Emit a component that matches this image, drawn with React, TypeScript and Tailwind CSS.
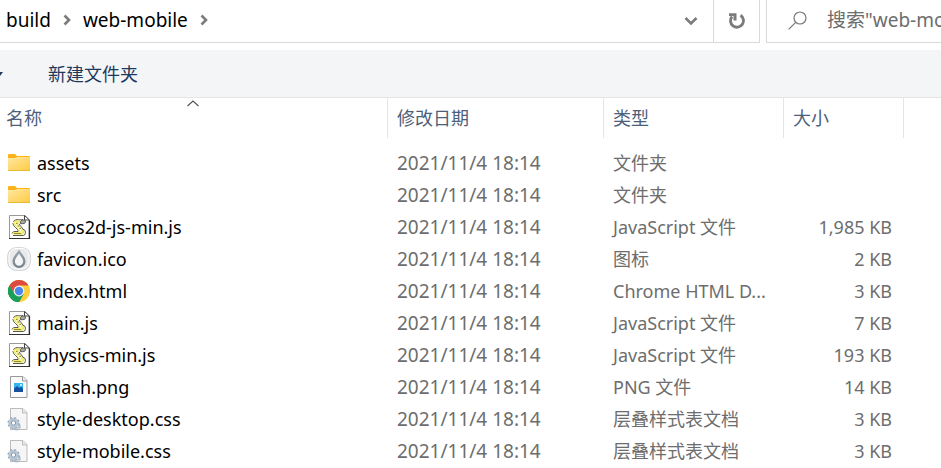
import React from "react";

type Kind = "folder" | "script" | "favicon" | "chrome" | "image" | "css";

const files: { name: string; kind: Kind; type: string; size: string }[] = [
  { name: "assets", kind: "folder", type: "文件夹", size: "" },
  { name: "src", kind: "folder", type: "文件夹", size: "" },
  { name: "cocos2d-js-min.js", kind: "script", type: "JavaScript 文件", size: "1,985 KB" },
  { name: "favicon.ico", kind: "favicon", type: "图标", size: "2 KB" },
  { name: "index.html", kind: "chrome", type: "Chrome HTML D...", size: "3 KB" },
  { name: "main.js", kind: "script", type: "JavaScript 文件", size: "7 KB" },
  { name: "physics-min.js", kind: "script", type: "JavaScript 文件", size: "193 KB" },
  { name: "splash.png", kind: "image", type: "PNG 文件", size: "14 KB" },
  { name: "style-desktop.css", kind: "css", type: "层叠样式表文档", size: "3 KB" },
  { name: "style-mobile.css", kind: "css", type: "层叠样式表文档", size: "3 KB" },
];

function FileIcon({ kind }: { kind: Kind }) {
  const common = { width: 24, height: 24, viewBox: "0 0 24 24", fill: "none", className: "shrink-0", "aria-hidden": true };
  switch (kind) {
    case "folder":
      return (
        <svg {...common}>
          <defs>
            <linearGradient id="folder" x1="0" y1="0" x2="1" y2="1">
              <stop offset="0" stopColor="#ffe8a2" />
              <stop offset="1" stopColor="#ffcb45" />
            </linearGradient>
          </defs>
          <path d="M1 4q0-1 1-1h6l2 2h12q1 0 1 1v3H1z" fill="#f9b41c" />
          <path d="M1 7h7l2-1h13v13.500H1z" fill="url(#folder)" />
          <path d="M1 19.500h22" stroke="#e9b93a" />
        </svg>
      );
    case "script":
      return (
        <svg {...common}>
          <path d="M2.500.500H18l4 4.500v18.500H2.500z" fill="#fff" stroke="#999" />
          <path d="M2 23.500h20.500V5" stroke="#333" strokeWidth="1.200" />
          <path d="M17.500.500V5h5z" fill="#fff" stroke="#444" />
          <path d="M9 4.800h7M6.500 7q.5-2.200 3-2.200M5.800 8q.2 2.500 2.700 4.500t3 4M5 18.500q.5-2 3-2h3M6 20.500h10.500q2-.5 2-3.200t-3-3.300M12 9l4 5" stroke="#444" strokeWidth=".9" />
          <path d="M9 5.500h5.500L13 8.500h-2.200l4.500 6q2.200.5 2.200 2.700t-2 2.600H7q-1.600-.3-1.600-1.300t2.100-1.400h4.300q.3-2-2.300-4.500T6.500 8.200Q6.600 5.800 9 5.500z" fill="#f0ea66" />
          <path d="M8.500 7.500q0 2 3 5t2.500 5.500" stroke="#fffbd0" strokeWidth="1.200" />
          <path d="M15 5h1.800q2 .4 1.700 2t-2.500 1.700h-2.500Q13 6 15 5z" fill="#aaa" stroke="#444" strokeWidth=".8" />
          <path d="M9 8.500h1.500M10.500 11h2M12.500 13.500h1.500M7 18.500h7" stroke="#77752f" strokeWidth=".8" />
        </svg>
      );
    case "favicon":
      return (
        <svg {...common}>
          <defs>
            <linearGradient id="drop" x1="0" y1="0" x2="0" y2="1">
              <stop offset="0" stopColor="#a3aab0" />
              <stop offset="1" stopColor="#71808b" />
            </linearGradient>
          </defs>
          <rect x=".8" y=".8" width="22.400" height="22.400" rx="8" fill="#e9eaec" stroke="#c8cacd" />
          <rect x="2" y="1.500" width="20" height="20.500" rx="7" stroke="#fff" />
          <path d="M12 2.500C10 6 5.500 10 5.500 14.500a6.500 6.500 0 0 0 13 0C18.500 10 14 6 12 2.500z" fill="url(#drop)" />
          <path d="M12 6.500c-1.200 2.500-4.200 5-4.200 8a4.200 4.200 0 0 0 8.400 0c0-3-3-5.500-4.200-8z" fill="#f4f5f6" />
        </svg>
      );
    case "chrome":
      return (
        <svg {...common}>
          <circle cx="12" cy="12" r="11" fill="#fdd03b" />
          <path d="M12 12L2.470 6.500A11 11 0 0 1 21.530 6.500H12z" fill="#dd4b3e" />
          <path d="M2.470 6.500A11 11 0 0 0 12 23l4.760-8.250L12 12 7.240 14.750z" fill="#1a9f5b" />
          <path d="M2.470 6.500l4.770 8.250L12 12V6.500z" fill="#dd4b3e" />
          <path d="M2.470 6.500l4.770 8.250A5.500 5.500 0 0 0 12 17.500L16.760 14.750 12 23A11 11 0 0 1 2.470 6.500z" fill="#1a9f5b" />
          <circle cx="12" cy="12" r="5.400" fill="#f4f4f4" />
          <circle cx="12" cy="12" r="4.200" fill="#4b87ed" />
        </svg>
      );
    case "image":
      return (
        <svg {...common}>
          <path d="M3.500 1.500H16l4 4v17H3.500z" fill="#fafafa" stroke="#999" />
          <path d="M15.500 1.500v4.500h4.500" fill="#eee" stroke="#999" />
          <path d="M7 8h9v9H7z" fill="#1597e5" />
          <path d="M7 8h9v4H7z" fill="#35b4f2" />
          <path d="M7 17v-3l3-3 2.500 2.500L14 12l2 2v3z" fill="#164f9e" />
          <circle cx="14" cy="10" r=".9" fill="#fff" />
        </svg>
      );
    case "css":
      return (
        <svg {...common}>
          <path d="M3.500 1.500H16l4 4v17H3.500z" fill="#f6f6f6" stroke="#bbb" />
          <path d="M15.500 1.500v4.500h4.500" fill="#eaeaea" stroke="#bbb" />
          <circle cx="9.500" cy="19.500" r="3" stroke="#a4b3c0" strokeWidth="2.400" strokeDasharray="1.800 .9" />
          <circle cx="6.500" cy="16" r="3.700" stroke="#b9c8d4" strokeWidth="3" />
          <circle cx="6.500" cy="16" r="5.400" stroke="#9fb0bf" strokeWidth="1.500" strokeDasharray="2.120 2.120" />
          <circle cx="6.500" cy="16" r="2.200" fill="#f8fafb" stroke="#8698a8" />
        </svg>
      );
  }
}

function Crumb({ label }: { label: string }) {
  return (
    <>
      <button type="button" className="whitespace-nowrap">{label}</button>
      <svg width="8" height="12" viewBox="0 0 8 12" fill="none" className="mx-3 shrink-0" aria-hidden="true">
        <path d="M1.500 1.500L6 6l-4.500 4.500" stroke="#7b7b7b" strokeWidth="2.600" />
      </svg>
    </>
  );
}

export default function App() {
  return (
    <main className="overflow-hidden bg-white font-['Noto_Sans','Noto_Sans_CJK_SC',sans-serif] text-[18px] leading-6 text-black">
      <header className="mb-[7px] flex h-[43px] gap-1.5 text-[19px]">
        <div className="flex min-w-0 flex-1 border-r border-b border-[#d9d9d9]">
          <nav aria-label="路径" className="flex min-w-0 flex-1 items-center pb-0.5 pl-1.5">
            <Crumb label="build" />
            <Crumb label="web-mobile" />
          </nav>
          <button type="button" aria-label="历史记录" className="flex w-11 items-center justify-center">
            <svg width="14" height="10" viewBox="0 0 14 10" fill="none" aria-hidden="true">
              <path d="M1.500 2L7 7.500 12.500 2" stroke="#7b7b7b" strokeWidth="2.600" />
            </svg>
          </button>
          <button type="button" aria-label="刷新" className="flex w-[46px] items-center justify-center border-l border-[#d9d9d9]">
            <svg width="18" height="18" viewBox="0 0 18 18" fill="none" aria-hidden="true">
              <path d="M4 4.500A6.500 6.500 0 1 0 12.500 3.200" stroke="#7b7b7b" strokeWidth="2.900" />
              <path d="M1 1.200h7.500v7.300H5.500V4H1z" fill="#7b7b7b" />
            </svg>
          </button>
        </div>
        <label className="flex w-[175px] items-center gap-5 overflow-hidden border-b border-l border-[#d9d9d9] pb-0.5 pl-[21px]">
          <svg width="19" height="19" viewBox="0 0 19 19" fill="none" className="shrink-0" aria-hidden="true">
            <circle cx="12" cy="7" r="6" stroke="#777" strokeWidth="1.200" />
            <path d="M7.700 11.300L.700 18.300" stroke="#777" strokeWidth="1.200" />
          </svg>
          <input type="text" aria-label="搜索" placeholder={'搜索"web-mobile"'} className="min-w-0 flex-1 outline-none placeholder:text-[#6d6d6d]" />
        </label>
      </header>

      <div className="flex h-12 items-center gap-[45px] border-b border-[#e5e5e5] bg-[#f4f5f7] text-[#1e395b]">
        <svg width="3" height="4" viewBox="0 0 3 4" aria-hidden="true">
          <path d="M-3 0h6L0 4z" fill="#1e395b" />
        </svg>
        <button type="button">新建文件夹</button>
      </div>

      <table className="w-full table-fixed border-separate border-spacing-0 text-left">
        <colgroup>
          <col className="w-[388px]" />
          <col className="w-[216px]" />
          <col className="w-[180px]" />
          <col className="w-[120px]" />
          <col />
        </colgroup>
        <thead>
          <tr className="h-10 text-[#4c607a]">
            <th scope="col" aria-sort="ascending" className="relative border-r border-[#e5e5e5] p-0 pl-1.5 font-normal">
              名称
              <svg width="12" height="7" viewBox="0 0 12 7" fill="none" className="absolute top-0.5 left-[187px]" aria-hidden="true">
                <path d="M.500 6L6 1l5.500 5" stroke="#555" strokeWidth="1.200" />
              </svg>
            </th>
            <th scope="col" className="border-r border-[#e5e5e5] p-0 pl-[9px] font-normal">修改日期</th>
            <th scope="col" className="border-r border-[#e5e5e5] p-0 pl-[9px] font-normal">类型</th>
            <th scope="col" className="border-r border-[#e5e5e5] p-0 pl-[9px] font-normal">大小</th>
            <td />
          </tr>
        </thead>
        <tbody className="text-[#6d6d6d] before:block before:h-[9px]">
          {files.map((file) => (
            <tr key={file.name} className="h-8">
              <td className="p-0 pl-[7px] text-black">
                <div className="flex items-center gap-1.5">
                  <FileIcon kind={file.kind} />
                  <span className="truncate">{file.name}</span>
                </div>
              </td>
              <td className="p-0 pl-[9px] text-[19px]">2021/11/4 18:14</td>
              <td className="truncate p-0 pl-[9px]">{file.type}</td>
              <td className="p-0 pr-3 text-right">{file.size}</td>
              <td />
            </tr>
          ))}
        </tbody>
      </table>
    </main>
  );
}
